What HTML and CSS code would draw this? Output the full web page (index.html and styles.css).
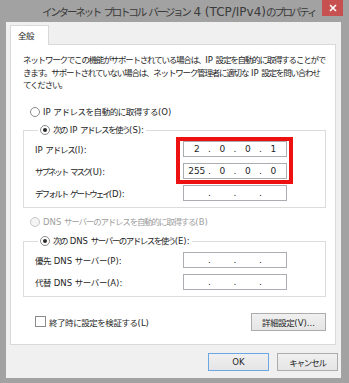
FILE: index.html
```html
<!DOCTYPE html>
<html lang="ja">
<head>
    <meta charset="UTF-8">
    <meta name="viewport" content="width=device-width, initial-scale=1.0">
    <title>インターネット プロトコル バージョン 4 (TCP/IPv4)のプロパティ</title>
    <link rel="stylesheet" href="styles.css">
</head>
<body>
    <div class="window">
        <div class="titlebar">
            <div class="title sq">インターネット プロトコル バージョン<span class="en"> 4 (TCP/IPv4)</span>のプロパティ</div>
            <div class="close">
                <svg width="8" height="8" viewBox="0 0 8 8"><path d="M1 1L7 7M7 1L1 7" stroke="#fff" stroke-width="1.6"/></svg>
            </div>
        </div>
        <div class="client">
            <div class="tabs">
                <div class="tab sq-sm">全般</div>
            </div>
            <div class="panel">
                <p class="desc sq-md">ネットワークでこの機能がサポートされている場合は、<span class="en">IP </span>設定を自動的に取得することがで<br>きます。サポートされていない場合は、ネットワーク管理者に適切な<span class="en"> IP </span>設定を問い合わせ<br>てください。</p>

                <div class="radio first"><span class="circle"></span><span class="sq-sm"><span class="en">IP </span>アドレスを自動的に取得する<span class="en">(O)</span></span></div>

                <fieldset class="group">
                    <legend class="radio"><span class="circle checked"></span><span class="sq-lg">次の<span class="en"> IP </span>アドレスを使う<span class="en">(S):</span></span></legend>
                    <div class="row">
                        <span class="sq-md"><span class="en">IP </span>アドレス<span class="en">(I):</span></span>
                        <div class="ipbox"><span class="seg">2</span><span class="sep">.</span><span class="seg">0</span><span class="sep">.</span><span class="seg">0</span><span class="sep">.</span><span class="seg">1</span></div>
                    </div>
                    <div class="row">
                        <span class="sq-xl">サブネット マスク<span class="en">(U):</span></span>
                        <div class="ipbox"><span class="seg">255</span><span class="sep">.</span><span class="seg">0</span><span class="sep">.</span><span class="seg">0</span><span class="sep">.</span><span class="seg">0</span></div>
                    </div>
                    <div class="row">
                        <span class="sq-xl">デフォルト ゲートウェイ<span class="en">(D):</span></span>
                        <div class="ipbox"><span class="seg"></span><span class="sep">.</span><span class="seg"></span><span class="sep">.</span><span class="seg"></span><span class="sep">.</span><span class="seg"></span></div>
                    </div>
                    <div class="highlight"></div>
                </fieldset>

                <div class="radio disabled"><span class="circle"></span><span class="sq-md"><span class="en">DNS </span>サーバーのアドレスを自動的に取得する<span class="en">(B)</span></span></div>

                <fieldset class="group dns">
                    <legend class="radio"><span class="circle checked"></span><span class="sq-lg">次の<span class="en"> DNS </span>サーバーのアドレスを使う<span class="en">(E):</span></span></legend>
                    <div class="row">
                        <span class="sq-sm">優先<span class="en"> DNS </span>サーバー<span class="en">(P):</span></span>
                        <div class="ipbox"><span class="seg"></span><span class="sep">.</span><span class="seg"></span><span class="sep">.</span><span class="seg"></span><span class="sep">.</span><span class="seg"></span></div>
                    </div>
                    <div class="row">
                        <span class="sq-sm">代替<span class="en"> DNS </span>サーバー<span class="en">(A):</span></span>
                        <div class="ipbox"><span class="seg"></span><span class="sep">.</span><span class="seg"></span><span class="sep">.</span><span class="seg"></span><span class="sep">.</span><span class="seg"></span></div>
                    </div>
                </fieldset>

                <div class="options">
                    <div class="check"><span class="box"></span><span class="sq-sm">終了時に設定を検証する<span class="en">(L)</span></span></div>
                    <button class="btn advanced sq-sm">詳細設定<span class="en">(V)...</span></button>
                </div>
            </div>
            <div class="buttons">
                <button class="btn default">OK</button>
                <button class="btn sq-md">キャンセル</button>
            </div>
        </div>
    </div>
</body>
</html>
```

FILE: styles.css
```css
body {
    margin: 0;
    font-family: "DejaVu Sans", "Noto Sans CJK JP", sans-serif;
    font-size: 8.5px;
    color: #1e1e1e;
}

/* Meiryo UI の詰まった仮名に幅を合わせる (英数字は .en で元に戻す) */
.sq-sm { --ls: -0.45px; }
.sq-md { --ls: -1.2px; }
.sq-lg { --ls: -1.5px; }
.sq-xl { --ls: -2.05px; }
.sq, .sq-sm, .sq-md, .sq-lg, .sq-xl {
    letter-spacing: var(--ls);
    word-spacing: calc(0px - var(--ls));
}
.en {
    letter-spacing: 0;
    word-spacing: 0;
}

.window {
    width: 349px;
    height: 383px;
    box-sizing: border-box;
    background: #a2a2a2;
    padding: 0 8px 5px 6px;
    display: flex;
    flex-direction: column;
}
.titlebar {
    height: 22px;
    display: flex;
    align-items: flex-start;
}
.title {
    --ls: -2.2px;
    flex: 1;
    min-width: 0;
    overflow: hidden;
    padding-left: 36px;
    padding-top: 4px;
    font-size: 10.5px;
    line-height: 16px;
    color: #3a3a3a;
    white-space: nowrap;
}
.title .en {
    font-size: 12px;
}
.close {
    flex: none;
    width: 21px;
    height: 16px;
    margin-right: -2px;
    background: #c75050;
    display: flex;
    align-items: center;
    justify-content: center;
}
.client {
    flex: 1;
    background: #f0f0f0;
    padding: 3px 4px 0 4px;
    display: flex;
    flex-direction: column;
}
.tabs {
    display: flex;
}
.tab {
    width: 39px;
    height: 20px;
    box-sizing: border-box;
    border: 1px solid #d9d9d9;
    border-bottom: none;
    background: #fff;
    margin-bottom: -1px;
    position: relative;
    padding: 3px 0 0 7px;
    line-height: 14px;
}
.panel {
    background: #fff;
    border: 1px solid #d9d9d9;
    height: 301px;
    box-sizing: border-box;
    margin-right: 1px;
    padding: 9px 9px 0 12px;
}
.desc {
    margin: 0;
    line-height: 12.5px;
    white-space: nowrap;
}
.radio {
    display: flex;
    align-items: center;
    height: 13px;
    line-height: 13px;
    white-space: nowrap;
}
.radio.first {
    margin: 14px 0 0 7px;
}
.radio.disabled {
    margin: 8px 0 0 7px;
    color: #a0a0a0;
}
.circle {
    flex: none;
    width: 10px;
    height: 10px;
    box-sizing: border-box;
    border: 1px solid #8a8a8a;
    border-radius: 50%;
    background: #fff;
    margin-right: 3px;
    display: flex;
    align-items: center;
    justify-content: center;
}
.disabled .circle {
    border-color: #c8c8c8;
    background: #f4f4f4;
}
.circle.checked::after {
    content: "";
    width: 4px;
    height: 4px;
    border-radius: 50%;
    background: #2a2a2a;
}
.group {
    position: relative;
    margin: 5px 0 0 0;
    border: 1px solid #dcdcdc;
    padding: 4px 38px 6px 11px;
    min-width: 0;
}
.group.dns {
    margin-top: 6px;
    padding-bottom: 6px;
}
.group legend {
    padding: 0 2px;
    margin-left: 3px;
}
.row {
    display: flex;
    align-items: center;
    justify-content: space-between;
    height: 16px;
    margin-top: 6px;
    white-space: nowrap;
}
.row:first-of-type {
    margin-top: 0;
}
.ipbox {
    flex: none;
    width: 104px;
    height: 16px;
    box-sizing: border-box;
    border: 1px solid #abadb3;
    background: #fff;
    display: flex;
    align-items: center;
    padding: 0 2px;
    font-size: 9px;
}
.seg {
    flex: 1;
    text-align: center;
}
.sep {
    width: 4px;
    text-align: center;
}
.highlight {
    position: absolute;
    left: 152px;
    top: 0;
    width: 117px;
    height: 47px;
    box-sizing: border-box;
    border: 4px solid #ee1111;
}
.options {
    display: flex;
    align-items: center;
    justify-content: space-between;
    margin-top: 16px;
}
.check {
    display: flex;
    align-items: center;
    margin-left: 12px;
    white-space: nowrap;
}
.box {
    flex: none;
    width: 11px;
    height: 11px;
    box-sizing: border-box;
    border: 1px solid #8a8a8a;
    background: #fff;
    margin-right: 3px;
}
.btn {
    font-family: inherit;
    font-size: 8.5px;
    color: #1e1e1e;
    height: 18px;
    padding: 0;
    border: 1px solid #acacac;
    background: linear-gradient(#f0f0f0, #e5e5e5);
    white-space: nowrap;
}
.advanced {
    width: 75px;
}
.buttons {
    display: flex;
    justify-content: flex-end;
    gap: 8px;
    margin-top: 8px;
    margin-right: -1px;
}
.buttons .btn {
    width: 61px;
}
.btn.default {
    border-color: #6aa7e4;
}
```
